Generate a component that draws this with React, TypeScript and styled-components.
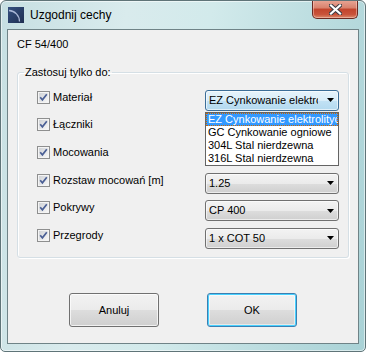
import React from "react";
import styled, {createGlobalStyle} from "styled-components";

const GlobalStyle = createGlobalStyle`
  html, body {
    margin: 0;
    padding: 0;
    background: #ffffff;
  }
  * {
    box-sizing: border-box;
  }
  body {
    font-family: "Liberation Sans", Arial, sans-serif;
    font-size: 11px;
    color: #000000;
  }
`;

const Window = styled.div`
  width: 366px;
  height: 352px;
  display: flex;
  flex-direction: column;
  border: 1px solid #5f7478;
  border-radius: 6px 6px 5px 5px;
  background: linear-gradient(100deg, #c6dfe2 0%, #d9ebed 30%, #d2eaeb 50%, #bcdde0 75%, #a9d2d6 100%);
  box-shadow: inset 0 0 0 1px rgba(255, 255, 255, 0.55);
  overflow: hidden;
`;

const TitleBar = styled.div`
  height: 28px;
  display: flex;
  align-items: center;
  padding: 0 7px 0 7px;
`;

const Title = styled.span`
  margin-left: 6px;
  font-size: 12px;
  color: #000000;
`;

const CloseBox = styled.div`
  margin-left: auto;
  align-self: flex-start;
  margin-top: -1px;
  width: 46px;
  height: 19px;
  display: flex;
  align-items: center;
  justify-content: center;
  border: 1px solid #6b2a22;
  border-top: none;
  border-radius: 0 0 5px 5px;
  background: linear-gradient(#e9a797 0%, #d8816c 45%, #c2442c 50%, #c9533a 80%, #db8a6c 100%);
  box-shadow: inset 0 0 0 1px rgba(255, 220, 210, 0.45);
`;

const Client = styled.div`
  flex: 1;
  margin: 0 6px 7px 6px;
  border: 1px solid #6f8387;
  background: #f0f0f0;
  display: flex;
  flex-direction: column;
  padding: 8px 0 16px 0;
`;

const Caption = styled.div`
  padding-left: 9px;
  line-height: 13px;
`;

const Group = styled.fieldset`
  margin: 15px 0 0 9px;
  width: 332px;
  padding: 0;
  border: 1px solid #d5dfe5;
  border-radius: 3px;
  box-shadow: inset 1px 1px 0 #ffffff, 1px 1px 0 #ffffff;
`;

const Legend = styled.legend`
  margin-left: 6px;
  padding: 0 1px;
  line-height: 13px;
`;

const Rows = styled.div`
  padding: 6px 0 6px 19px;
`;

const Row = styled.div`
  display: grid;
  grid-template-columns: 168px 134px;
  height: 27.6px;
  align-items: center;
`;

const CheckLabel = styled.label`
  display: flex;
  align-items: center;
  gap: 3px;
  line-height: 13px;
  margin-bottom: 3px;
`;

const ComboWrap = styled.div`
  position: relative;
  margin-top: 3px;
`;

const Combo = styled.div<{ $open?: boolean }>`
  height: 21px;
  display: flex;
  align-items: center;
  border: 1px solid ${p => (p.$open ? "#3c6e98" : "#707070")};
  border-radius: 3px;
  padding: 0 4px 0 3px;
  background: ${p =>
    p.$open
      ? "linear-gradient(#e6f3fb 0%, #d8edf9 50%, #c2e2f5 51%, #b3d9ef 100%)"
      : "linear-gradient(#f3f3f3 0%, #ebebeb 50%, #dddddd 51%, #cfcfcf 100%)"};
  box-shadow: inset 0 0 0 1px rgba(255, 255, 255, 0.6);
`;

const ComboText = styled.span`
  flex: 1;
  overflow: hidden;
  white-space: nowrap;
  line-height: 19px;
  margin-right: 9px;
`;

const DropList = styled.div`
  position: absolute;
  top: 100%;
  left: 0;
  width: 134px;
  margin-top: 1px;
  border: 1px solid #646464;
  background: #ffffff;
  z-index: 2;
`;

const DropItem = styled.div<{ $selected?: boolean }>`
  height: 13px;
  line-height: 13px;
  padding-left: 2px;
  white-space: nowrap;
  overflow: hidden;
  background: ${p => (p.$selected ? "#3399ff" : "transparent")};
  color: ${p => (p.$selected ? "#ffffff" : "#000000")};
  outline: ${p => (p.$selected ? "1px dotted #cc6600" : "none")};
  outline-offset: -1px;
`;

const Buttons = styled.div`
  margin-top: auto;
  display: flex;
  justify-content: center;
  gap: 48px;
`;

const Button = styled.button<{ $default?: boolean }>`
  width: 90px;
  height: 34px;
  padding: 0;
  font-family: "Liberation Sans", Arial, sans-serif;
  font-size: 11px;
  color: #000000;
  border: 1px solid ${p => (p.$default ? "#3c7fb1" : "#707070")};
  border-radius: 3px;
  background: linear-gradient(#f2f2f2 0%, #ebebeb 50%, #dddddd 51%, #cfcfcf 100%);
  box-shadow: ${p =>
    p.$default
      ? "inset 0 0 0 1px #48d1ff, inset 0 0 0 2px rgba(255,255,255,0.5)"
      : "inset 0 0 0 1px rgba(255,255,255,0.7)"};
`;

const AppIcon = () => (
  <svg width="16" height="16" viewBox="0 0 16 16">
    <defs>
      <linearGradient id="ig" x1="0" y1="0" x2="1" y2="1">
        <stop offset="0" stopColor="#34507f"/>
        <stop offset="1" stopColor="#1f2f52"/>
      </linearGradient>
    </defs>
    <rect x="0" y="0" width="16" height="16" fill="url(#ig)"/>
    <path d="M1 3.5 A11 11 0 0 1 11.5 14.5" fill="none" stroke="#a9b7d6" strokeWidth="1.3"/>
  </svg>
);

const CloseGlyph = () => (
  <svg width="13" height="11" viewBox="0 0 13 11">
    <path d="M2 1.5 L11 9.5 M11 1.5 L2 9.5" stroke="#3d3d44" strokeWidth="4.2" strokeLinecap="square"/>
    <path d="M2 1.5 L11 9.5 M11 1.5 L2 9.5" stroke="#ffffff" strokeWidth="2.2" strokeLinecap="square"/>
  </svg>
);

const CheckBox = () => (
  <svg width="13" height="13" viewBox="0 0 13 13">
    <defs>
      <linearGradient id="cb" x1="0" y1="0" x2="1" y2="1">
        <stop offset="0" stopColor="#cfd2d6"/>
        <stop offset="1" stopColor="#f7f7f7"/>
      </linearGradient>
    </defs>
    <rect x="0.5" y="0.5" width="12" height="12" fill="#f4f4f4" stroke="#8e8f8f"/>
    <rect x="2" y="2" width="9" height="9" fill="url(#cb)"/>
    <path d="M3.2 6.2 L5.4 8.8 L9.8 3.3" fill="none" stroke="#4a5f95" strokeWidth="1.7"/>
  </svg>
);

const Arrow = () => (
  <svg width="7" height="4" viewBox="0 0 7 4">
    <path d="M0 0 H7 L3.5 4 Z" fill="#000000"/>
  </svg>
);

type RowData = { label: string; value?: string; open?: boolean };

const rows: RowData[] = [
  {label: "Materiał", value: "EZ Cynkowanie elektrolityczne", open: true},
  {label: "Łączniki"},
  {label: "Mocowania"},
  {label: "Rozstaw mocowań [m]", value: "1.25"},
  {label: "Pokrywy", value: "CP 400"},
  {label: "Przegrody", value: "1 x COT 50"},
];

const materials = [
  "EZ Cynkowanie elektrolityczne",
  "GC Cynkowanie ogniowe",
  "304L Stal nierdzewna",
  "316L Stal nierdzewna",
];

export default function App() {
  return (
    <>
      <GlobalStyle/>
      <Window>
        <TitleBar>
          <AppIcon/>
          <Title>Uzgodnij cechy</Title>
          <CloseBox>
            <CloseGlyph/>
          </CloseBox>
        </TitleBar>
        <Client>
          <Caption>CF 54/400</Caption>
          <Group>
            <Legend>Zastosuj tylko do:</Legend>
            <Rows>
              {rows.map(r => (
                <Row key={r.label}>
                  <CheckLabel>
                    <CheckBox/>
                    {r.label}
                  </CheckLabel>
                  {r.value ? (
                    <ComboWrap>
                      <Combo $open={r.open}>
                        <ComboText>{r.value}</ComboText>
                        <Arrow/>
                      </Combo>
                      {r.open && (
                        <DropList>
                          {materials.map((m, i) => (
                            <DropItem key={m} $selected={i === 0}>{m}</DropItem>
                          ))}
                        </DropList>
                      )}
                    </ComboWrap>
                  ) : <span/>}
                </Row>
              ))}
            </Rows>
          </Group>
          <Buttons>
            <Button>Anuluj</Button>
            <Button $default>OK</Button>
          </Buttons>
        </Client>
      </Window>
    </>
  );
}
